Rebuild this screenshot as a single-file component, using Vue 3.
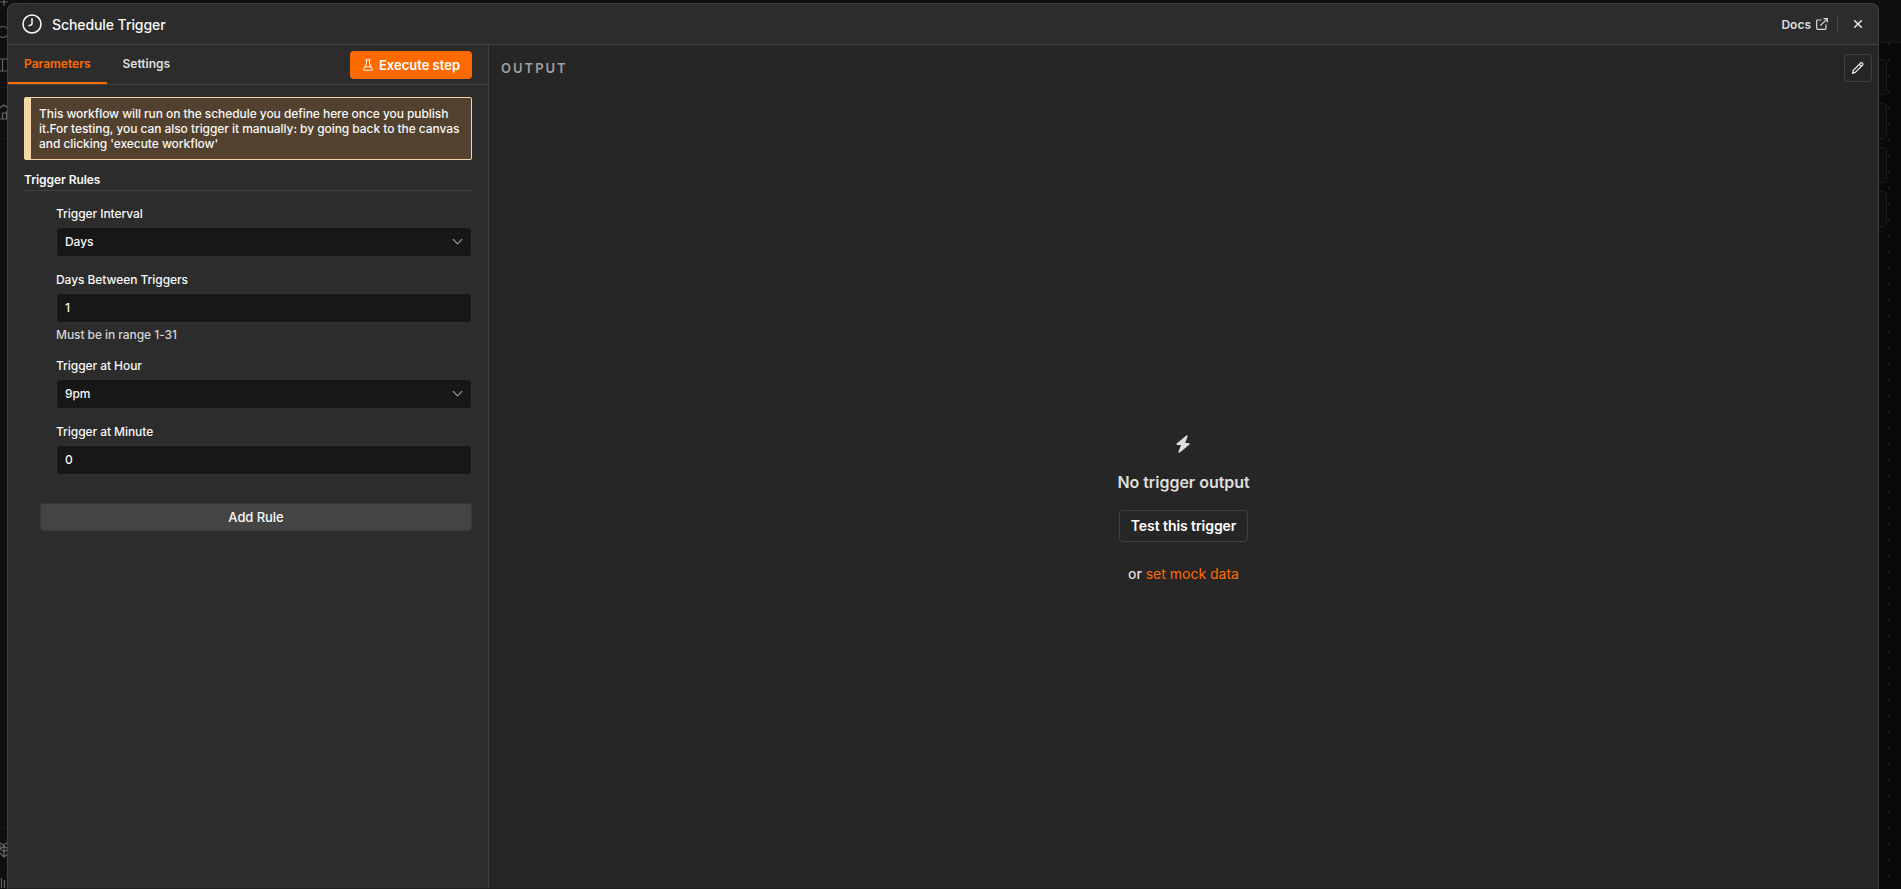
<template>
  <div class="app">
    <!-- dimmed editor behind the dialog -->
    <div class="editor">
      <aside class="sidebar">
        <svg class="side-icon plus" viewBox="0 0 16 16"><path d="M4 0v6M0 2h8" /></svg>
        <svg class="side-icon search" viewBox="0 0 16 16"><circle cx="3" cy="8" r="5.5" /></svg>
        <svg class="side-icon panel" viewBox="0 0 16 16"><path d="M-3 2H12V14H-3M2.500 2V14" /></svg>
        <svg class="side-icon home" viewBox="0 0 16 16">
          <path d="M-2 5L4 1l5 4M-1 6v9h10M6.500 15V7M2.500 15V9h4" />
        </svg>
        <svg class="side-icon box" viewBox="0 0 16 16">
          <path d="M0 1l3 2 4-2 1 1M0 7l4-3 4 3M0 7l4 3 4-3M4 4v11M0 11l4 4 4-3M0 3v4M8 3v9" />
        </svg>
        <svg class="side-icon chart" viewBox="0 0 16 16"><path d="M1.500 1v10M4.500 3v8M7.500 7v4" /></svg>
      </aside>
      <div class="workspace">
        <div class="topbar"></div>
        <div class="canvas">
          <div v-for="n in 4" :key="n" class="canvas-btn"></div>
        </div>
      </div>
    </div>

    <div class="dialog">
      <header class="dialog-header">
        <svg class="clock" viewBox="0 0 20 20">
          <circle cx="10" cy="10" r="9" />
          <path d="M10 4.300v5.200q0 1.200-1.100 1.500l-2.400.9" />
        </svg>
        <span class="dialog-title">Schedule Trigger</span>
        <a class="docs">
          Docs
          <svg viewBox="0 0 12 12">
            <path d="M5.500 2H1.700Q.7 2 .7 3v7.300q0 1 1 1H9q1 0 1-1V6.500M4.300 7.700L11.200.8M7.500.7h3.800v3.800" />
          </svg>
        </a>
        <span class="divider"></span>
        <button class="close" @click="close">
          <svg viewBox="0 0 8 8"><path d="M.3.300l7.400 7.400M7.700.3L.3 7.700" /></svg>
        </button>
      </header>

      <div class="dialog-body">
        <section class="params">
          <nav class="tabs">
            <button
              v-for="tab in tabs"
              :key="tab"
              class="tab"
              :class="{ active: tab === activeTab }"
              @click="activeTab = tab"
            >
              {{ tab }}
            </button>
            <button class="execute">
              <svg viewBox="0 0 10 12">
                <path d="M2.500.8h5M3.500.8v4L.8 9.600Q.3 11.300 1.700 11.300h6.600q1.400 0 .9-1.700L6.500 4.800v-4M2 7.800h6" />
              </svg>
              Execute step
            </button>
          </nav>

          <div class="params-content">
            <div class="notice">
              This workflow will run on the schedule you define here once you publish it.For testing,
              you can also trigger it manually: by going back to the canvas and clicking 'execute
              workflow'
            </div>
            <h3 class="section-title">Trigger Rules</h3>

            <div class="rules">
              <div v-for="field in fields" :key="field.label" class="field">
                <label>{{ field.label }}</label>
                <div class="control">
                  <span>{{ field.value }}</span>
                  <svg v-if="field.select" viewBox="0 0 12 7"><path d="M1 1l5 5 5-5" /></svg>
                </div>
                <p v-if="field.hint" class="hint">{{ field.hint }}</p>
              </div>
            </div>

            <button class="add-rule">Add Rule</button>
          </div>
        </section>

        <section class="output">
          <div class="output-header">
            <span class="output-title">OUTPUT</span>
            <button class="edit">
              <svg viewBox="0 0 12 12">
                <path d="M1.300 8.300L8.500 1.100q1-.8 1.900.1.900 1 .1 1.900L3.400 10.300.7 11.300zM7.300 2.400l2 2" />
              </svg>
            </button>
          </div>
          <div class="empty">
            <svg class="bolt" viewBox="0 0 14 18">
              <path d="M10.300 0.400L1 8.300Q-.2 9.900 1.500 10.100H5L2.400 16.800Q2.500 18.200 3.900 17.500L13.200 9.800Q14.400 8.200 12.600 7.900H9.200L11.700 1.300Q11.700-.3 10.300.4z" />
            </svg>
            <h2>No trigger output</h2>
            <button class="test">Test this trigger</button>
            <p class="mock">or <a>set mock data</a></p>
          </div>
        </section>
      </div>
    </div>
  </div>
</template>

<script setup>
import { ref } from "vue";

const emit = defineEmits(["close"]);

const tabs = ["Parameters", "Settings"];
const activeTab = ref("Parameters");

const fields = ref([
  { label: "Trigger Interval", value: "Days", select: true },
  { label: "Days Between Triggers", value: "1", hint: "Must be in range 1-31" },
  { label: "Trigger at Hour", value: "9pm", select: true },
  { label: "Trigger at Minute", value: "0" },
]);

const close = () => {
  emit("close");
};
</script>

<style>
body {
  margin: 0;
  background: #090909;
}
</style>

<style scoped>
.app {
  position: relative;
  height: 100vh;
  overflow: hidden;
  font-family: Inter, "Liberation Sans", sans-serif;
  font-size: 12px;
  font-weight: 500;
  letter-spacing: -0.065px;
  color: #f8f8f8;
}

.app * {
  box-sizing: border-box;
}

button {
  font: inherit;
  letter-spacing: inherit;
  color: inherit;
  background: none;
  border: none;
  padding: 0;
  cursor: pointer;
}

svg {
  fill: none;
  stroke: currentColor;
  flex-shrink: 0;
}

/* editor */
.editor {
  display: flex;
  height: 100%;
}

.sidebar {
  display: flex;
  flex-direction: column;
  width: 25px;
  background: linear-gradient(#181818, #181818) 0 87px / 100% 1px no-repeat,
    linear-gradient(#181818, #181818) 0 138px / 100% 1px no-repeat,
    linear-gradient(#181818, #181818) 0 827px / 100% 1px no-repeat, #0f0f0f;
  border-right: 1px solid #191919;
}

.side-icon {
  width: 16px;
  height: 16px;
  color: #666;
  stroke-width: 1.2;
}

.search {
  margin-top: 8px;
}

.panel {
  margin-top: 17px;
}

.home {
  margin-top: 31px;
}

.box {
  margin-top: 722px;
}

.chart {
  margin-top: 19px;
}

.workspace {
  flex: 1;
  display: flex;
  flex-direction: column;
}

.topbar {
  height: 43px;
  background: #0f0f0f;
  border-bottom: 1px solid #191919;
}

.canvas {
  flex: 1;
  display: flex;
  flex-direction: column;
  align-items: flex-end;
  gap: 8px;
  padding: 16px 14px 0 0;
  background: radial-gradient(circle, #1f1f1f 0.6px, transparent 1px) 0 -7px / 16px 16px #090909;
}

.canvas-btn {
  width: 36px;
  height: 36px;
  border: 1px solid #1b1b1b;
  border-radius: 4px;
  background: #0c0c0c;
}

/* dialog */
.dialog {
  position: absolute;
  top: 3px;
  left: 7px;
  right: 22px;
  bottom: 0;
  display: flex;
  flex-direction: column;
  border: 1px solid #414141;
  border-bottom-color: #202020;
  border-radius: 8px 8px 0 0;
  background: #2c2c2c;
  overflow: hidden;
}

.dialog-header {
  display: flex;
  align-items: center;
  height: 41px;
  padding: 0 16px 0 14px;
  border-bottom: 1px solid #414141;
}

.clock {
  width: 20px;
  height: 20px;
  stroke-width: 1.5;
}

.dialog-title {
  margin: 0 auto 0 10px;
  font-size: 14px;
  letter-spacing: -0.08px;
}

.docs {
  display: flex;
  align-items: center;
  gap: 5px;
  color: #dedede;
  font-weight: 600;
  letter-spacing: 0;
}

.docs svg {
  width: 12px;
  height: 12px;
  stroke-width: 1.2;
}

.divider {
  width: 1px;
  height: 16px;
  margin: 0 16px 0 9px;
  background: #454545;
}

.close {
  display: flex;
}

.close svg {
  width: 8px;
  height: 8px;
  stroke-width: 1.3;
}

.dialog-body {
  flex: 1;
  display: flex;
  min-height: 0;
}

.params {
  width: 481px;
  border-right: 1px solid #414141;
}

.tabs {
  display: flex;
  height: 40px;
  border-bottom: 1px solid #414141;
}

.tab {
  height: 39px;
  padding: 0 16px;
  border-bottom: 2px solid transparent;
  font-weight: 600;
  letter-spacing: 0;
  color: #dedede;
}

.tab.active {
  color: #ff6a00;
  border-bottom-color: #ff6a00;
}

.execute {
  display: flex;
  align-items: center;
  justify-content: center;
  gap: 6px;
  width: 122px;
  height: 28px;
  margin: 6px 16px 0 auto;
  padding: 0 0 1px 1px;
  border-radius: 4px;
  background: #ff6a00;
  color: #fff;
  font-size: 13px;
  font-weight: 600;
  letter-spacing: 0;
}

.execute svg {
  width: 10px;
  height: 12px;
}

.params-content {
  padding: 12px 16px 0;
}

.notice {
  height: 63px;
  padding: 8px;
  border: 1px solid #f7d8a4;
  border-left-width: 7px;
  border-radius: 2px;
  background: #51412e;
  line-height: 15px;
}

.section-title {
  height: 31px;
  margin: 0;
  padding-top: 12px;
  border-bottom: 1px solid #414141;
  font-size: 12px;
  font-weight: 600;
  line-height: 16px;
}

.rules {
  padding: 15px 0 0 32px;
}

.field {
  margin-bottom: 15px;
}

.field label {
  display: block;
  height: 21px;
  line-height: 16px;
}

.control {
  display: flex;
  align-items: center;
  justify-content: space-between;
  height: 30px;
  padding: 0 8px 1px;
  border: 1px solid #303030;
  border-radius: 4px;
  background: #171717;
}

.control svg {
  width: 11px;
  height: 7px;
  color: #a8a8a8;
  stroke-width: 1.1;
}

.hint {
  height: 20px;
  margin: 0;
  padding-top: 4px;
  line-height: 16px;
  color: #d4d4d4;
}

.add-rule {
  display: block;
  width: 432px;
  height: 28px;
  margin: 28px 0 0 16px;
  border: 1px solid #383838;
  border-radius: 3px;
  background: #444;
  font-size: 13px;
}

/* output panel */
.output {
  flex: 1;
  display: flex;
  flex-direction: column;
  background: #262626;
}

.output-header {
  display: flex;
  justify-content: space-between;
  align-items: center;
  height: 28px;
  margin: 9px 6px 0 12px;
}

.output-title {
  color: #a0a0a0;
  font-size: 13px;
  font-weight: 600;
  letter-spacing: 2px;
}

.edit {
  display: flex;
  align-items: center;
  justify-content: center;
  width: 28px;
  height: 28px;
  border: 1px solid #414141;
  border-radius: 4px;
}

.edit svg {
  width: 12px;
  height: 12px;
  stroke-width: 1.2;
}

.empty {
  display: flex;
  flex-direction: column;
  align-items: center;
  padding-top: 353px;
}

.bolt {
  width: 14px;
  height: 18px;
  margin-right: 1px;
  fill: #dedede;
  stroke: none;
}

.empty h2 {
  margin: 19px 0 0;
  font-size: 16px;
  font-weight: 600;
  letter-spacing: -0.03px;
  line-height: 20px;
  color: #dedede;
}

.test {
  width: 129px;
  height: 32px;
  margin-top: 18px;
  padding-bottom: 1px;
  border: 1px solid #414141;
  border-radius: 4px;
  color: #fff;
  font-size: 14px;
  font-weight: 600;
}

.mock {
  margin: 22px 0 0;
  font-size: 14px;
  line-height: 20px;
  letter-spacing: 0;
  color: #dedede;
}

.mock a {
  color: #ff6a00;
  font-weight: 400;
}
</style>
